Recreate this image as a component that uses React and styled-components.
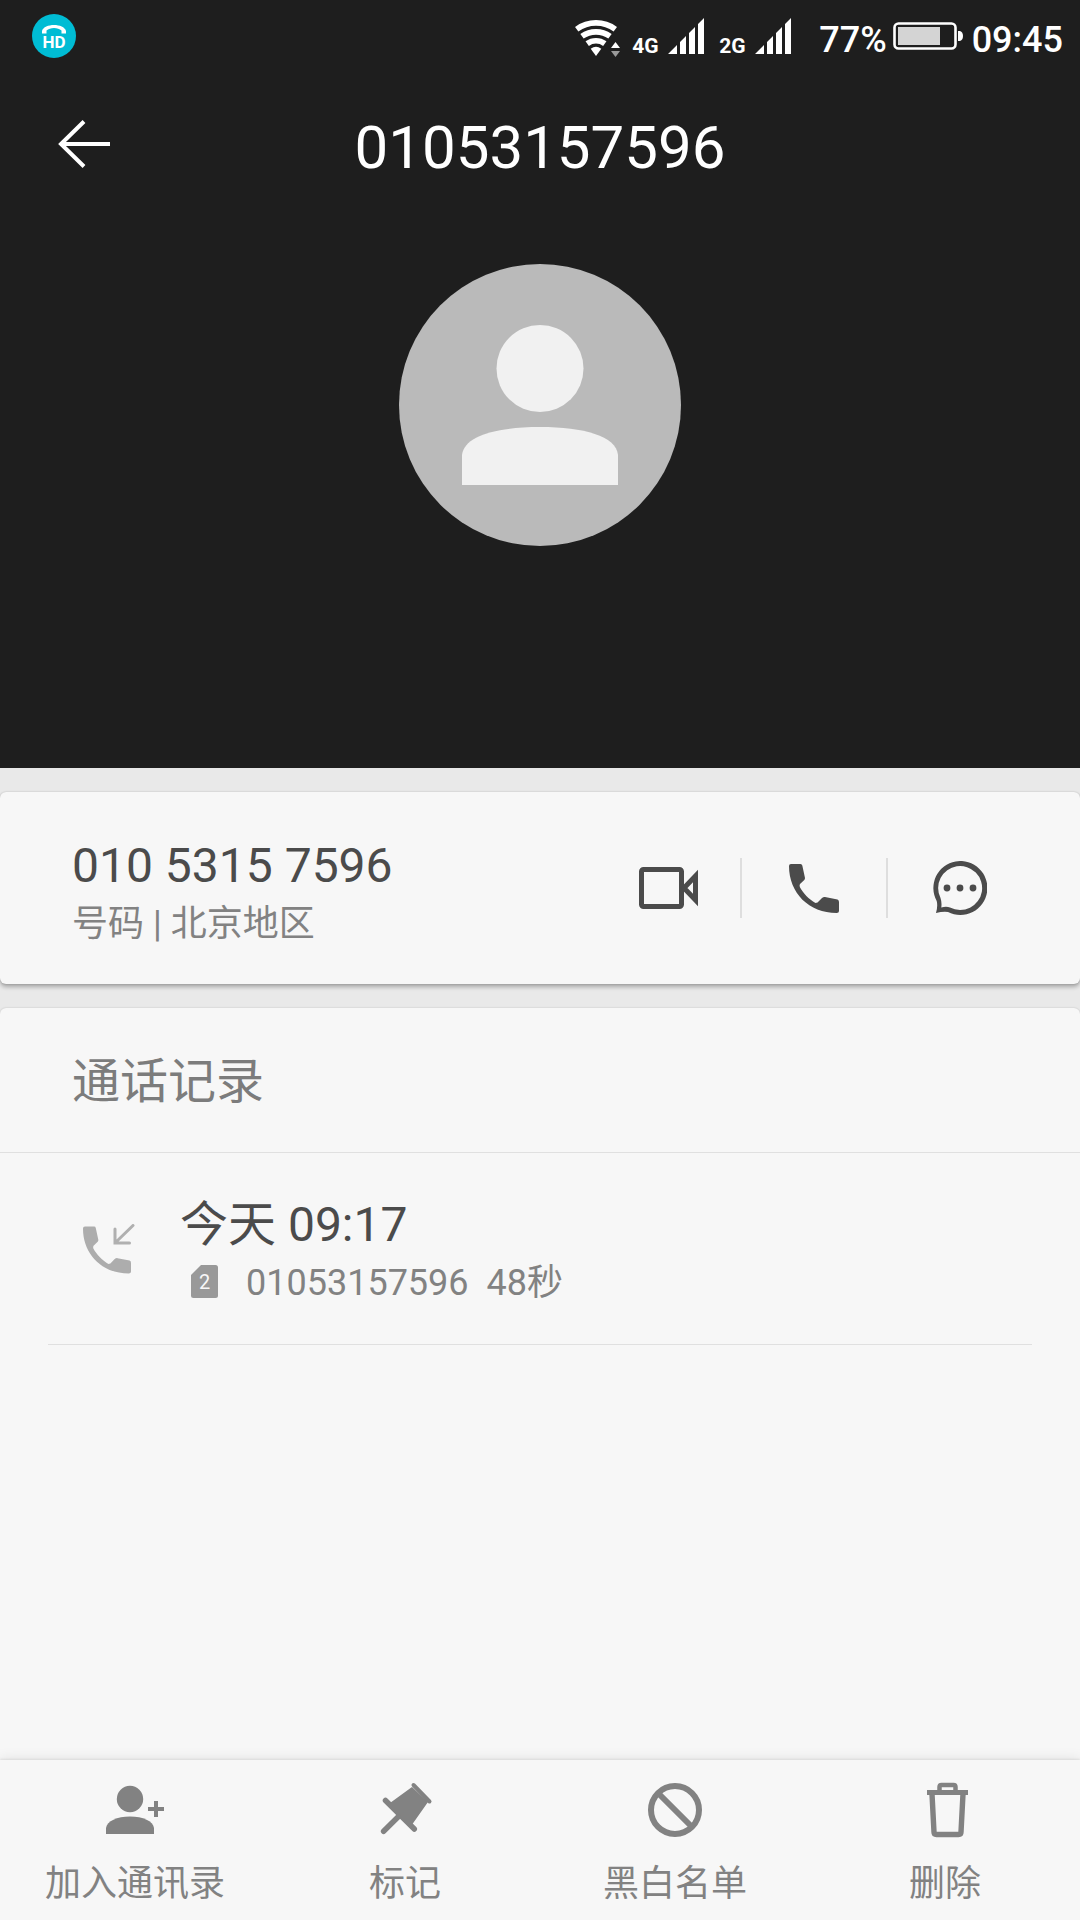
import styled, { createGlobalStyle } from "styled-components";

const GlobalStyle = createGlobalStyle`
  * {
    box-sizing: border-box;
  }

  body {
    margin: 0;
    background: #f7f7f7;
    font-family: Roboto, "Noto Sans CJK SC", sans-serif;
  }

  h1, h2, p {
    margin: 0;
    font-weight: 400;
  }

  svg {
    display: block;
    flex: none;
  }
`;

/* ---------- icons ---------- */

const HdIcon = () => (
  <svg width="44" height="44" viewBox="0 0 44 44">
    <circle cx="22" cy="22" r="22" fill="#00bcd4" />
    <path
      d="M10 19 V17 C12 9 32 9 34 17 V19.500 H29.500 V16.500 C26 13 18 13 14.500 16.500 V19.500 H10Z"
      fill="#fff"
    />
    <text x="22" y="34" fontSize="17" fontWeight="700" textAnchor="middle" fill="#fff">
      HD
    </text>
  </svg>
);

const WifiIcon = () => (
  <svg width="46" height="42" viewBox="0 0 46 42">
    <g fill="none" stroke="#fff" strokeWidth="5.7">
      <path d="M1.700 14.200 A32.800 32.800 0 0 1 40.300 14.200" />
      <path d="M7 21.300 A24 24 0 0 1 35 21.300" />
      <path d="M12.200 28.600 A15 15 0 0 1 29.800 28.600" />
    </g>
    <path d="M21 41 L15.700 33.800 A9 9 0 0 1 26.300 33.800Z" fill="#fff" />
    <path d="M36 33 L40.500 27 L45 33Z" fill="#fff" />
    <path d="M36 36 L40.500 42 L45 36Z" fill="#999" />
  </svg>
);

const SignalIcon = () => (
  <svg width="36" height="36" viewBox="0 0 36 36" fill="#fff">
    <path d="M0 36 L9 27 V36Z M12 24 L18 18 V36 H12Z M21 15 L27 9 V36 H21Z M30 6 L36 0 V36 H30Z" />
  </svg>
);

const BatteryIcon = () => (
  <svg width="70" height="28" viewBox="0 0 70 28">
    <rect x="1.500" y="1.500" width="61" height="25" rx="4" fill="none" stroke="#fff" strokeWidth="2.600" />
    <rect x="5" y="5" width="42" height="18" fill="#d4d4d4" />
    <path d="M65 9 H67 Q70 10 70 14 Q70 18 67 19 H65Z" fill="#fff" />
  </svg>
);

const BackIcon = () => (
  <svg width="52" height="48" viewBox="0 0 52 48" fill="none" stroke="#fff" strokeWidth="4">
    <path d="M52 24 H4 M26 1.500 L3 24 L26 46.500" />
  </svg>
);

const Avatar = () => (
  <svg width="282" height="282" viewBox="0 0 282 282">
    <circle cx="141" cy="141" r="141" fill="#bababa" />
    <circle cx="141" cy="104.500" r="43.500" fill="#f1f1f1" />
    <path d="M63 221 V191 C65 172 97 163 141 163 C185 163 217 172 219 191 V221Z" fill="#f1f1f1" />
  </svg>
);

const VideoIcon = () => (
  <svg width="60" height="60" viewBox="0 0 60 60" fill="none" stroke="#4b4b4b" strokeWidth="5">
    <rect x="3.500" y="11.500" width="40" height="37" rx="2" />
    <path d="M57.500 18 V42 L46 30Z" />
  </svg>
);

const HANDSET =
  "M2 0 H11.500 Q13 0 13.300 1.500 L16 14 Q16 15 15.300 16 L11 20 Q10.300 21 10.800 23 C14 29 20 35.500 26.500 39 L28.500 38.500 L33 34 Q34.500 32.700 36 33 L48.500 35.500 Q50 36 50 38 V47 Q50 49 47.700 49 C20 49 0 29 0 2 Q0 0 2 0Z";

const PhoneIcon = () => (
  <svg width="50" height="49" viewBox="0 0 50 49" fill="#4b4b4b">
    <path d={HANDSET} />
  </svg>
);

const ChatIcon = () => (
  <svg width="54" height="54" viewBox="0 0 54 54" fill="#4b4b4b">
    <path
      fillRule="evenodd"
      d="M3 52 Q5 45 3.700 40 A27 27 0 1 1 15 51 Q10 50.300 3 52Z M7.500 37 Q9 41.500 8.300 46.500 Q13.500 45 17 46.600 A22 22 0 1 0 7.500 37Z"
    />
    <circle cx="14" cy="27" r="3.400" />
    <circle cx="27" cy="27" r="3.400" />
    <circle cx="40" cy="27" r="3.400" />
  </svg>
);

const IncomingIcon = () => (
  <svg width="52" height="50" viewBox="0 0 52 50">
    <svg y="2" width="48" height="48" viewBox="0 0 50 49" fill="#adadad">
      <path d={HANDSET} />
    </svg>
    <path
      d="M50 1.500 L32.500 18.500 M32 5 V19 H46.500"
      fill="none"
      stroke="#b0b0b0"
      strokeWidth="3"
      strokeLinecap="round"
    />
  </svg>
);

const SimIcon = () => (
  <svg width="27" height="33" viewBox="0 0 27 33">
    <path d="M10 0 H24.500 Q27 0 27 2.500 V30.500 Q27 33 24.500 33 H2.500 Q0 33 0 30.500 V10Z" fill="#999" />
    <text x="13.500" y="24" fontSize="20" textAnchor="middle" fill="#f7f7f7">
      2
    </text>
  </svg>
);

const AddPersonIcon = () => (
  <svg width="60" height="60" viewBox="0 0 60 60" fill="#828282">
    <circle cx="25" cy="19" r="13.200" />
    <path d="M1 54 V48 C2 41 12 36.500 25 36.500 C38 36.500 48 41 49 48 V54Z" />
    <path d="M43 29 H59 M51 21 V37" stroke="#828282" strokeWidth="4" />
  </svg>
);

const PinIcon = () => (
  <svg width="60" height="60" viewBox="0 0 60 60" fill="#828282" stroke="#828282" strokeLinecap="round">
    <path d="M37 7 L53 22 L37.500 44 L34 43 L14 23 L16 22.300Z" stroke="none" />
    <path d="M38.500 5 L54.500 21.500" strokeWidth="4" />
    <path d="M10.500 20.500 L39.300 49" strokeWidth="5.500" />
    <path d="M8.600 51.300 L23 37" strokeWidth="5.500" />
  </svg>
);

const BlockIcon = () => (
  <svg width="60" height="60" viewBox="0 0 60 60" fill="none" stroke="#828282" strokeWidth="6">
    <circle cx="30" cy="30" r="24" />
    <path d="M13 13 L47 47" />
  </svg>
);

const TrashIcon = () => (
  <svg width="60" height="60" viewBox="0 0 60 60" fill="none" stroke="#828282" strokeWidth="5">
    <path d="M12 12.500 H53" />
    <path d="M24.500 12 V7 Q24.500 5 26.500 5 H38.500 Q40.500 5 40.500 7 V12" strokeWidth="4.500" />
    <path d="M17 14 L19 52 Q19 54.500 21.500 54.500 H43.500 Q46 54.500 46 52 L48 14" strokeWidth="5.400" />
  </svg>
);

/* ---------- page ---------- */

const actions = [
  { label: "视频通话", icon: <VideoIcon /> },
  { label: "拨打电话", icon: <PhoneIcon /> },
  { label: "发送信息", icon: <ChatIcon /> },
];

const tabs = [
  { label: "加入通讯录", icon: <AddPersonIcon /> },
  { label: "标记", icon: <PinIcon /> },
  { label: "黑白名单", icon: <BlockIcon /> },
  { label: "删除", icon: <TrashIcon /> },
];

function App() {
  return (
    <Page>
      <GlobalStyle />

      <Header>
        <StatusBar>
          <HdIcon />
          <StatusGroup>
            <WifiIcon />
            <Network>
              <NetworkType>4G</NetworkType>
              <SignalIcon />
            </Network>
            <Network>
              <NetworkType>2G</NetworkType>
              <SignalIcon />
            </Network>
            <Power>
              <StatusText>77%</StatusText>
              <BatteryIcon />
            </Power>
            <StatusText>09:45</StatusText>
          </StatusGroup>
        </StatusBar>
        <TitleBar>
          <BackButton aria-label="返回">
            <BackIcon />
          </BackButton>
          <Title>01053157596</Title>
        </TitleBar>
        <AvatarWrapper>
          <Avatar />
        </AvatarWrapper>
      </Header>

      <Content>
        <NumberCard>
          <NumberInfo>
            <Primary>010 5315 7596</Primary>
            <Secondary>号码 | 北京地区</Secondary>
          </NumberInfo>
          <Actions>
            {actions.map(({ label, icon }) => (
              <ActionButton key={label} aria-label={label}>
                {icon}
              </ActionButton>
            ))}
          </Actions>
        </NumberCard>

        <LogCard>
          <LogTitle>通话记录</LogTitle>
          <LogRow>
            <LogIcon>
              <IncomingIcon />
            </LogIcon>
            <LogInfo>
              <Primary>今天 09:17</Primary>
              <LogDetail>
                <SimIcon />
                <Secondary>01053157596&nbsp; 48秒</Secondary>
              </LogDetail>
            </LogInfo>
          </LogRow>
        </LogCard>
      </Content>

      <BottomBar>
        {tabs.map(({ label, icon }) => (
          <TabButton key={label}>
            {icon}
            {label}
          </TabButton>
        ))}
      </BottomBar>
    </Page>
  );
}

const Page = styled.div`
  display: flex;
  flex-direction: column;
  min-height: 100vh;
`;

const Header = styled.header`
  padding-bottom: 222px;
  background: #1e1e1e;
  color: #fff;
`;

const StatusBar = styled.div`
  display: flex;
  align-items: center;
  justify-content: space-between;
  height: 72px;
  padding: 0 17px 0 32px;
`;

const StatusGroup = styled.div`
  display: flex;
  align-items: center;
`;

const Network = styled.div`
  display: flex;
  align-items: center;
  margin-left: 11px;

  & + & {
    margin-left: 15px;
  }
`;

const NetworkType = styled.span`
  width: 36px;
  margin-top: 20px;
  font-size: 21px;
  font-weight: 700;
  line-height: 24px;
`;

const Power = styled.div`
  display: flex;
  align-items: center;
  gap: 6px;
  margin: 0 9px 0 28px;
`;

const StatusText = styled.span`
  margin-top: 8px;
  font-size: 36px;
  font-weight: 500;
  line-height: 48px;
`;

const TitleBar = styled.div`
  display: grid;
  grid-template-columns: 168px 1fr 168px;
  align-items: center;
  height: 152px;
`;

const BackButton = styled.button`
  padding: 0 0 8px 58px;
  border: 0;
  background: none;
  cursor: pointer;
`;

const Title = styled.h1`
  font-size: 60px;
  line-height: 72px;
  text-align: center;
`;

const AvatarWrapper = styled.div`
  display: flex;
  justify-content: center;
  margin-top: 40px;
`;

const Content = styled.main`
  display: flex;
  flex: 1;
  flex-direction: column;
  gap: 24px;
  padding-top: 24px;
  background: #e9e9e9;
`;

const NumberCard = styled.section`
  display: flex;
  align-items: center;
  justify-content: space-between;
  min-height: 192px;
  padding: 0 48px 0 72px;
  border-radius: 6px;
  background: #f7f7f7;
  box-shadow: 0 0 2px rgba(0, 0, 0, 0.2), 0 3px 4px rgba(0, 0, 0, 0.28);
`;

const NumberInfo = styled.div`
  padding-top: 14px;
`;

const Primary = styled.p`
  color: #4b4b4b;
  font-size: 48px;
  line-height: 56px;
`;

const Secondary = styled.p`
  margin-top: 2px;
  color: #828282;
  font-size: 36px;
  line-height: 56px;
`;

const Actions = styled.div`
  display: flex;
`;

const ActionButton = styled.button`
  display: flex;
  align-items: center;
  justify-content: center;
  width: 146px;
  height: 60px;
  padding: 0;
  border: 0;
  border-left: 2px solid #dedede;
  background: none;
  cursor: pointer;

  &:first-child {
    border-left-color: transparent;
  }
`;

const LogCard = styled.section`
  flex: 1;
  border-radius: 6px 6px 0 0;
  background: #f7f7f7;
  box-shadow: 0 0 2px rgba(0, 0, 0, 0.2);
`;

const LogTitle = styled.h2`
  padding: 46px 72px 42px;
  border-bottom: 1px solid #e0e0e0;
  color: #7c7c7c;
  font-size: 48px;
  line-height: 56px;
`;

const LogRow = styled.div`
  display: flex;
  align-items: center;
  min-height: 192px;
  margin: 0 48px;
  border-bottom: 1px solid #e0e0e0;
`;

const LogIcon = styled.div`
  width: 132px;
  padding-left: 35px;
`;

const LogInfo = styled.div`
  padding-top: 10px;
`;

const LogDetail = styled.div`
  display: flex;
  align-items: center;
  gap: 28px;
  padding-left: 11px;
`;

const BottomBar = styled.nav`
  display: grid;
  grid-template-columns: repeat(4, 1fr);
  height: 160px;
  background: #f7f7f7;
  box-shadow: 0 -1px 2px rgba(0, 0, 0, 0.08), 0 -2px 12px rgba(0, 0, 0, 0.08);
`;

const TabButton = styled.button`
  display: flex;
  flex-direction: column;
  align-items: center;
  gap: 20px;
  padding: 20px 0 12px;
  border: 0;
  background: none;
  color: #828282;
  font-family: inherit;
  font-size: 36px;
  line-height: 48px;
  cursor: pointer;
`;

export default App;
